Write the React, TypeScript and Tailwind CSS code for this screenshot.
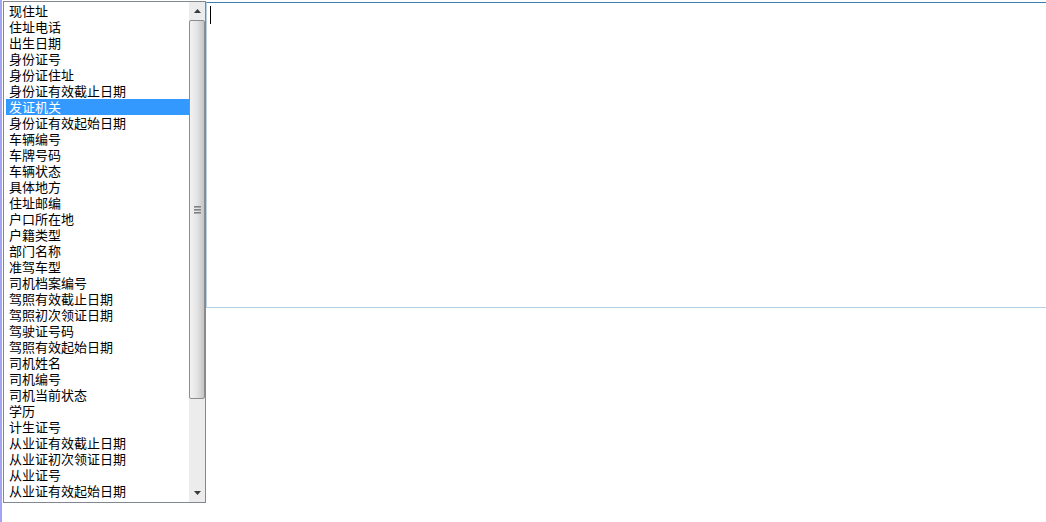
const items = [
  '现住址',
  '住址电话',
  '出生日期',
  '身份证号',
  '身份证住址',
  '身份证有效截止日期',
  '发证机关',
  '身份证有效起始日期',
  '车辆编号',
  '车牌号码',
  '车辆状态',
  '具体地方',
  '住址邮编',
  '户口所在地',
  '户籍类型',
  '部门名称',
  '准驾车型',
  '司机档案编号',
  '驾照有效截止日期',
  '驾照初次领证日期',
  '驾驶证号码',
  '驾照有效起始日期',
  '司机姓名',
  '司机编号',
  '司机当前状态',
  '学历',
  '计生证号',
  '从业证有效截止日期',
  '从业证初次领证日期',
  '从业证号',
  '从业证有效起始日期',
]

const selected = '发证机关'

function Scrollbar() {
  return (
    <div className="flex h-full w-[16px] shrink-0 flex-col bg-[#ececec]">
      <div className="flex h-[18px] items-center justify-center">
        <svg width="7" height="4" viewBox="0 0 7 4">
          <path d="M3.5 0 L7 4 L0 4 Z" fill="#3a3a3a" />
        </svg>
      </div>
      <div className="flex h-[379px] items-center justify-center rounded-[2px] border border-[#8c8c8c] bg-[linear-gradient(to_right,#f2f2f2,#e4e4e4_50%,#c4c4c4)]">
        <div className="flex flex-col gap-[1px]">
          <div className="h-[2px] w-[7px] bg-[linear-gradient(to_bottom,#6d6d6d,#bcbcbc)]" />
          <div className="h-[2px] w-[7px] bg-[linear-gradient(to_bottom,#6d6d6d,#bcbcbc)]" />
          <div className="h-[2px] w-[7px] bg-[linear-gradient(to_bottom,#6d6d6d,#bcbcbc)]" />
        </div>
      </div>
      <div className="flex-1" />
      <div className="flex h-[18px] items-center justify-center">
        <svg width="7" height="4" viewBox="0 0 7 4">
          <path d="M0 0 L7 0 L3.5 4 Z" fill="#3a3a3a" />
        </svg>
      </div>
    </div>
  )
}

export default function App() {
  return (
    <div className="flex h-[522px] w-[1046px] items-start overflow-hidden border-l-2 border-[#a4a4f4] bg-white font-['Noto_Sans_CJK_SC','Noto_Sans',sans-serif] text-[13px] text-black">
      <div className="ml-px mt-px flex h-[502px] w-[203px] shrink-0 border border-[#828790] bg-white">
        <ul className="flex-1 pl-[2px] pt-px">
          {items.map((item) => (
            <li
              key={item}
              className={
                item === selected
                  ? 'h-4 whitespace-nowrap bg-[#3399ff] pl-[3px] leading-4 text-white'
                  : 'h-4 whitespace-nowrap pl-[3px] leading-4'
              }
            >
              {item}
            </li>
          ))}
        </ul>
        <Scrollbar />
      </div>
      <div className="mt-[2px] h-[306px] flex-1 border-t border-b border-l border-t-[#3c7fb1] border-b-[#b6d0e6] border-l-[#b6d0e6] pl-[3px] pt-[3px]">
        <div className="h-[18px] w-px bg-black" />
      </div>
    </div>
  )
}
